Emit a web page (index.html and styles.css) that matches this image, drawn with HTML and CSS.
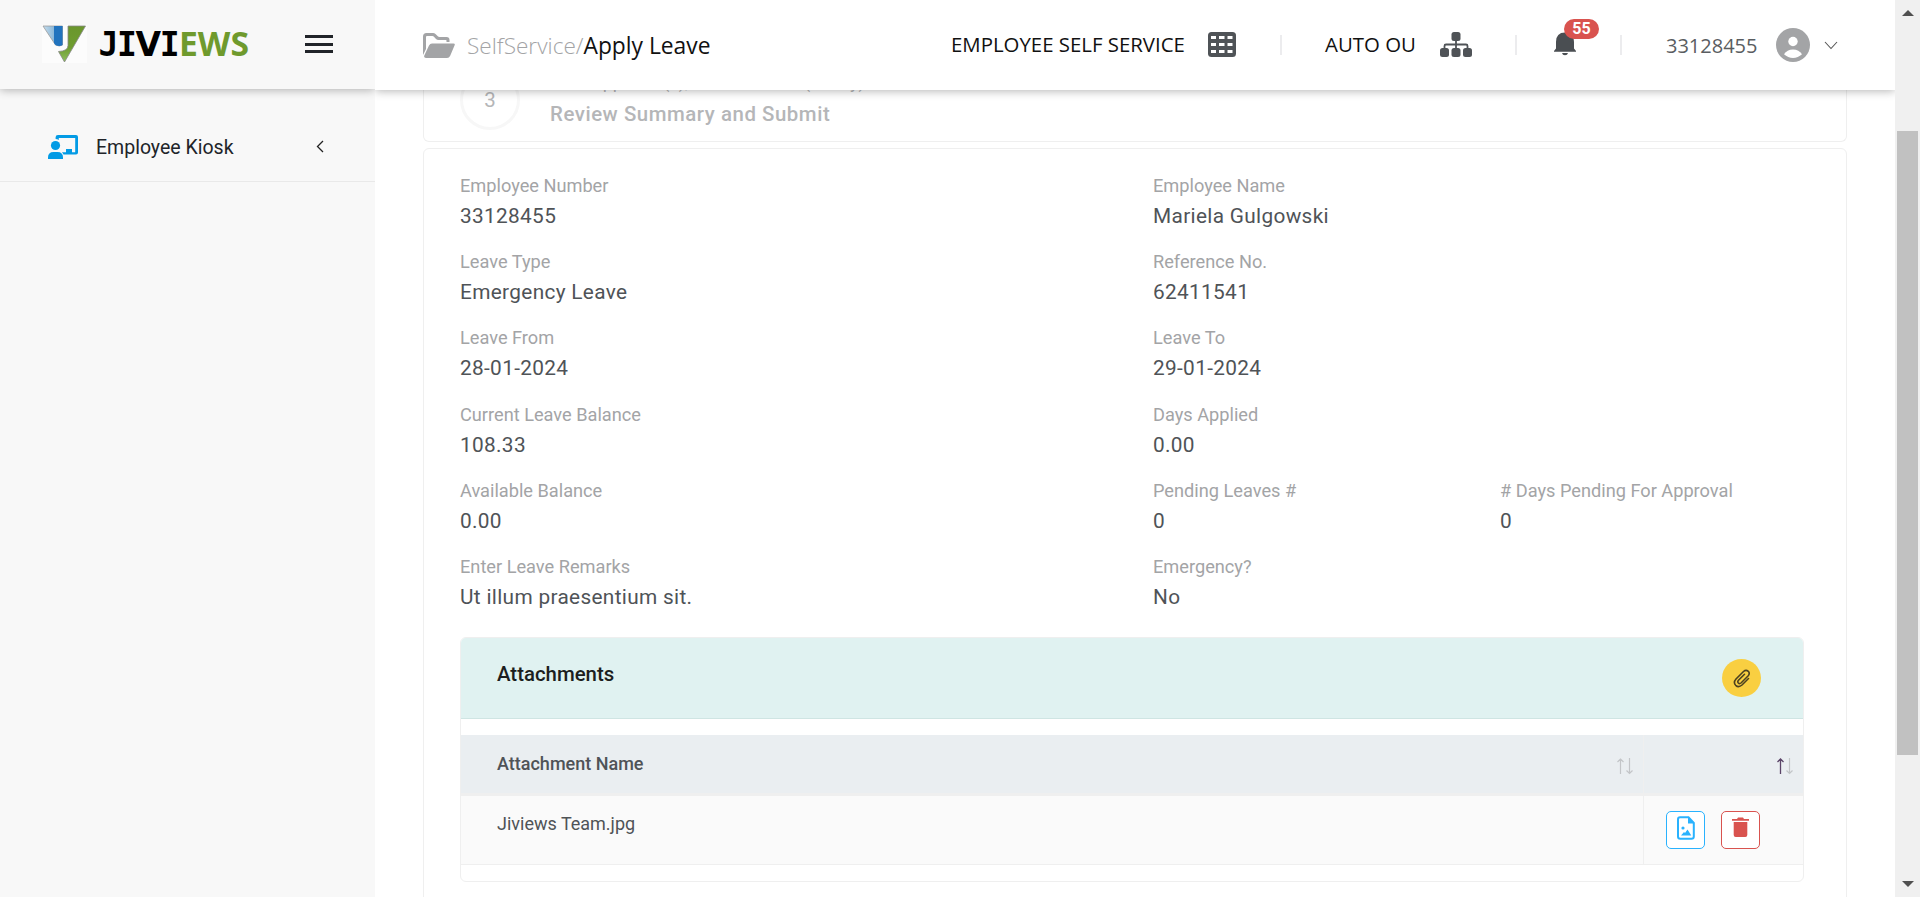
FILE: index.html
```html
<!DOCTYPE html>
<html lang="en">
<head>
<meta charset="utf-8">
<title>Apply Leave</title>
<link rel="stylesheet" href="styles.css">
</head>
<body>
<div class="app">
  <aside class="sidebar">
    <div class="brand">
      <svg class="logo" width="212" height="44" viewBox="0 0 212 44">
        <defs>
          <linearGradient id="blue" x1="0" x2="1"><stop offset="0" stop-color="#c5dcec"/><stop offset="1" stop-color="#5f9cc9"/></linearGradient>
          <linearGradient id="green" x1="0" y1="0" x2="0" y2="1"><stop offset="0" stop-color="#6a962c"/><stop offset=".6" stop-color="#6f9d30"/><stop offset="1" stop-color="#8fbf5e"/></linearGradient>
        </defs>
        <rect width="45" height="38" fill="#fcfcfc"/>
        <path d="M1 1h19.500v19q-3 2-7 0z" fill="url(#blue)" stroke="#999" stroke-width=".8"/>
        <path d="M12 1h8.500v19q-3 2-7 0l-1.500-2z" fill="#2173be"/>
        <path d="M26 1h17.500L22.500 37l-6-10.500q9.500-.5 9.500-6z" fill="url(#green)" stroke="#888" stroke-width=".8"/>
        <text class="logo-mono" y="30.500" x="56.500 75">JI</text>
        <text class="logo-wide" y="30.500" x="93.500">V</text>
        <text class="logo-mono" y="30.500" x="117.800">I</text>
        <text class="logo-green" y="30.500" x="137" textLength="70" lengthAdjust="spacingAndGlyphs">EWS</text>
      </svg>
      <div class="burger"><i></i><i></i><i></i></div>
    </div>
    <div class="menu-item">
      <svg width="30" height="24" viewBox="0 0 30 24" fill="#039be5"><path d="M10 0h18q2 0 2 2v15.500q0 2-2 2H15.500q-.7-1.500-1.600-2.300H18V14h6v3.200h3.200V2.900H10.800V5Q9.500 4 7.600 4V2.200Q7.600 0 10 0z"/><circle cx="7.500" cy="10.500" r="4.600"/><path d="M0 24v-1.500Q0 17 5.500 17h4q5.500 0 5.500 5.500V24z"/></svg>
      <span class="menu-label">Employee Kiosk</span>
      <svg class="menu-caret" width="8" height="13" viewBox="0 0 8 13" fill="none" stroke="#222" stroke-width="1.300"><path d="M7 1 1.500 6.500 7 12"/></svg>
    </div>
  </aside>

  <div class="main">
    <header class="topbar">
      <div class="crumb">
        <svg width="32" height="25" viewBox="0 0 32 25" fill="#a3a4a6"><path d="M0 22V3.500Q0 0 3.500 0H10q1.500 0 2.500 1l2.300 2.300q.6.700 1.700.7h7q3 0 3 3v2H23.500V7.500Q23.500 7 23 7H15.500q-1.500 0-2.500-1l-2.300-2.400Q10.200 3 9.500 3H4Q3 3 3 4v12z"/><path d="M9 10.500h21.500q2 0 1 2l-4.300 10.200Q26.200 25 24 25H3Q.5 25 1.300 22.500L6 12.500q1-2 3-2z"/></svg>
        <span class="crumb-parent">SelfService/</span><span class="crumb-page">Apply Leave</span>
      </div>
      <div class="module"><span>EMPLOYEE SELF SERVICE</span>
        <svg width="28" height="25" viewBox="0 0 28 25"><rect width="28" height="25" rx="3.500" fill="#4f5357"/><g fill="#fff"><path d="M3 4h5v3H3zM11 4h5.500v3H11zM19.500 4h5v3h-5zM3 11h5v3H3zM11 11h5.500v3H11zM19.500 11h5v3h-5zM3 18h5v3H3zM11 18h5.500v3H11zM19.500 18h5v3h-5z"/></g></svg>
      </div>
      <i class="divider"></i>
      <div class="unit"><span>AUTO OU</span>
        <svg width="32" height="25" viewBox="0 0 32 25" fill="#4f5357"><rect x="11.500" width="9" height="9" rx="2.500"/><rect y="16" width="9" height="9" rx="2.500"/><rect x="11.500" y="16" width="9" height="9" rx="2.500"/><rect x="23" y="16" width="9" height="9" rx="2.500"/><path d="M4.500 17v-3q0-1.500 1.500-1.500h20q1.500 0 1.500 1.500v3M16 8v9" fill="none" stroke="#4f5357" stroke-width="1.800"/></svg>
      </div>
      <i class="divider"></i>
      <div class="bell">
        <svg width="24" height="25" viewBox="0 0 24 25" fill="#4a4e52"><path d="M1 20 3 17.500V11Q3 1.500 12 1.500T21 11v6.500L23 20v.8H1zM9 22h6q-.5 2.200-3 2.200T9 22z"/></svg>
        <b class="badge">55</b>
      </div>
      <i class="divider"></i>
      <div class="user"><span>33128455</span>
        <svg class="avatar" width="34" height="34" viewBox="0 0 34 34"><circle cx="17" cy="17" r="17" fill="#a3a4a6"/><circle cx="17" cy="13.500" r="4.700" fill="#fff"/><path d="M8 26.300Q11 21.500 17 21.500t9 4.800Q22 30 17 30T8 26.300z" fill="#fff"/></svg>
        <svg class="user-caret" width="14" height="9" viewBox="0 0 14 9" fill="none" stroke="#555" stroke-width="1.100"><path d="M1 1l6 6.500L13 1"/></svg>
      </div>
    </header>

    <main class="content">
      <section class="steps">
        <div class="step-number">3</div>
        <div class="step-text">
          <div class="step-prev">Your Approver(s), Leave Details (Policy)</div>
          <div class="step-title">Review Summary and Submit</div>
        </div>
      </section>
      <section class="summary">
        <div class="fields">
          <div class="field wide"><label>Employee Number</label><p>33128455</p></div>
          <div class="field wide"><label>Employee Name</label><p>Mariela Gulgowski</p></div>
          <div class="field wide"><label>Leave Type</label><p>Emergency Leave</p></div>
          <div class="field wide"><label>Reference No.</label><p>62411541</p></div>
          <div class="field wide"><label>Leave From</label><p>28-01-2024</p></div>
          <div class="field wide"><label>Leave To</label><p>29-01-2024</p></div>
          <div class="field wide"><label>Current Leave Balance</label><p>108.33</p></div>
          <div class="field wide"><label>Days Applied</label><p>0.00</p></div>
          <div class="field wide"><label>Available Balance</label><p>0.00</p></div>
          <div class="field"><label>Pending Leaves #</label><p>0</p></div>
          <div class="field"><label># Days Pending For Approval</label><p>0</p></div>
          <div class="field wide"><label>Enter Leave Remarks</label><p>Ut illum praesentium sit.</p></div>
          <div class="field wide"><label>Emergency?</label><p>No</p></div>
        </div>
        <div class="attachments">
          <div class="att-head"><h2>Attachments</h2>
            <button class="clip"><svg width="18" height="19" viewBox="0 0 18 19" fill="none" stroke="#4c4120" stroke-width="1.600" stroke-linecap="round"><path d="M15.500 9.500 9 16Q5.500 19 2.700 16.300 0 13.500 3 10L10.500 2.500Q13 .3 15.300 2.300 17.300 4.500 15 7L8 14Q6.500 15.200 5.300 14 4.200 12.800 5.500 11.300L11.500 5.300"/></svg></button>
          </div>
          <div class="row row-head">
            <div class="cell name">Attachment Name<span class="sort"><svg width="16" height="17" viewBox="0 0 16 17" fill="none" stroke="#c3c5c8" stroke-width="1.200"><path d="M3.500 16V1M.5 4l3-3 3 3M12.500 0v15M9.500 12.500l3 3 3-3"/></svg></span></div>
            <div class="cell actions"><span class="sort"><svg width="16" height="17" viewBox="0 0 16 17" fill="none" stroke="#c3c5c8" stroke-width="1.200"><path stroke="#5b4468" stroke-width="1.300" d="M3.500 16V1M.5 4l3-3 3 3"/><path d="M12.500 0v15M9.500 12.500l3 3 3-3"/></svg></span></div>
          </div>
          <div class="row row-body">
            <div class="cell name">Jiviews Team.jpg</div>
            <div class="cell actions">
              <button class="btn view"><svg width="18" height="24" viewBox="0 0 18 24"><path d="M3 1.200h8.500L16.800 7v13.500q0 2.300-2.300 2.300H3.300Q1 22.800 1 20.500V3.400Q1 1.200 3 1.200z" fill="none" stroke="#29b2fe" stroke-width="2"/><path d="M11 1l6 6.500h-6z" fill="#29b2fe"/><circle cx="6" cy="12" r="1.600" fill="#29b2fe"/><path d="M4 19.500l3-3.500 1 1 2.500-3.500 3.800 6z" fill="#29b2fe"/></svg></button>
              <button class="btn trash"><svg width="17" height="20" viewBox="0 0 17 20" fill="#d9534f"><path d="M0 2h5l1-1.500h5L12 2h5v1.800H0zM1.700 5h13.600v13q0 2-2 2H3.700q-2 0-2-2z"/></svg></button>
            </div>
          </div>
        </div>
      </section>
    </main>
  </div>

  <div class="scrollbar"><i class="arrow up"></i><i class="thumb"></i><i class="arrow down"></i></div>
</div>
</body>
</html>
```
FILE: styles.css
```css
* { box-sizing: border-box; }
body { margin: 0; font-family: Roboto, sans-serif; font-size: 17.5px; color: #4f5357; background: #fff; overflow: hidden; }
p, h2 { margin: 0; }
svg { display: block; flex: none; }
button { padding: 0; }
.app { display: flex; height: 897px; }
.sidebar { width: 375px; flex: none; background: #f8f8f8; }
.brand { height: 89px; display: flex; align-items: flex-start; padding: 25px 42px 0; box-shadow: 0 1px 9px rgba(0,0,0,.3); clip-path: inset(0 0 -14px 0); }
.logo { overflow: visible; }
.logo-mono { font: bold 33px "DejaVu Sans Mono", monospace; fill: #000; }
.logo-wide { font: bold 33px "DejaVu Sans", sans-serif; fill: #000; }
.logo-green { font: bold 34px "Open Sans", sans-serif; fill: #6f9a2d; }
.burger { margin: 10px 0 0 51px; width: 28px; display: grid; gap: 4.5px; }
.burger i { height: 3px; background: #212429; }
.menu-item { height: 93px; padding: 23px 51px 0 48px; display: flex; align-items: center; border-bottom: 1px solid #e9e9e9; }
.menu-label { margin-left: 18px; padding-top: 2px; font-size: 19.5px; color: #212429; }
.menu-caret { margin-left: auto; }
.main { width: 1520px; flex: none; }
.topbar { position: relative; z-index: 1; height: 90px; background: #fff; box-shadow: 0 1px 9px rgba(0,0,0,.3); clip-path: inset(0 0 -14px 0); display: flex; align-items: center; font-family: "Open Sans", sans-serif; color: #111; padding-left: 48px; }
.crumb { display: flex; align-items: center; font-size: 22.8px; width: 528px; }
.crumb-parent { margin-left: 12px; font-weight: 300; font-size: 22.6px; color: #a3a4a6; }
.module, .unit { display: flex; align-items: center; font-size: 20.4px; padding-bottom: 2px; }
.module { width: 329px; }
.module svg { margin-left: 23px; }
.divider { width: 2px; height: 20px; background: #ececee; }
.unit { margin-left: 43px; width: 190px; }
.unit svg { margin-left: 24px; }
.bell { position: relative; margin-left: 36px; width: 67px; padding-bottom: 4px; }
.badge { position: absolute; left: 11px; top: -12px; width: 35px; height: 20px; border-radius: 10px; background: #d9534f; color: #fff; font: bold 16px/20px Roboto, sans-serif; text-align: center; }
.user { margin-left: 44px; display: flex; align-items: center; font-size: 20px; color: #5a5d61; }
.avatar { margin-left: 19px; }
.user-caret { margin-left: 14px; }
.content { padding: 0 48px; }
.steps { height: 52px; border: 1px solid #efefef; border-top: 0; border-radius: 0 0 6px 6px; display: flex; padding-left: 36px; color: #b5b6b8; }
.step-number { width: 60px; height: 60px; margin-top: -20px; border: 3px solid #f7f7f7; border-radius: 50%; font-size: 20.5px; line-height: 54px; text-align: center; }
.step-text { margin: -20px 0 0 30px; white-space: nowrap; }
.step-prev { font-size: 18px; line-height: 23px; padding-bottom: 2px; }
.step-title { font-weight: 500; font-size: 20.4px; line-height: 39px; letter-spacing: .55px; }
.summary { margin-top: 6px; height: 760px; border: 1px solid #efefef; border-radius: 6px; padding: 24px 42px 0 36px; }
.fields { display: grid; grid-template-columns: 347px 346px 347px 304px; grid-auto-rows: 76.200px; }
.field.wide { grid-column: span 2; }
.field label { display: block; color: #a3a4a6; font-size: 18.2px; line-height: 26px; }
.field p { font-size: 20.8px; line-height: 34px; letter-spacing: .33px; }
.attachments { margin-top: 7px; width: 1344px; height: 245px; border: 1px solid #efefef; border-radius: 6px; overflow: hidden; }
.att-head { height: 81px; background: #e0f2f1; border-bottom: 1px solid #cfe5e3; display: flex; justify-content: space-between; padding: 21px 42px 0 36px; margin-bottom: 16px; }
.att-head h2 { font-size: 20.400px; font-weight: 500; line-height: 31px; color: #1c1e20; }
.clip { width: 39px; height: 38px; border: 0; border-radius: 50%; background: #f9cf41; display: grid; place-items: center; }
.row { display: grid; grid-template-columns: 1183px 1fr; }
.row-head { height: 61px; background: #eaeef1; border-bottom: 3px solid #efefef; font-weight: 500; }
.row-body { height: 69px; background: #fafafa; border-bottom: 1px solid #efefef; }
.cell { position: relative; }
.name { padding-left: 36px; font-size: 18px; line-height: 57px; border-right: 1px solid #efefef; }
.row-body .name { line-height: 55px; }
.sort { position: absolute; right: 10px; top: 23px; }
.actions { display: flex; gap: 16px; padding: 15px 0 0 22px; }
.btn { width: 39px; height: 38px; border: 1px solid; border-radius: 5px; background: #fff; display: flex; justify-content: center; padding-top: 4px; }
.view { border-color: #29b2fe; }
.trash { border-color: #d9534f; padding-top: 5px; }
.scrollbar { width: 25px; background: #f0f0f0; display: flex; flex-direction: column; align-items: center; }
.arrow { border: 6px solid transparent; width: 0; height: 0; }
.up { border-bottom-color: #505050; border-top: 0; margin-top: 10px; }
.thumb { width: 21px; height: 624px; margin-top: 115px; background: #c1c1c1; }
.down { border-top-color: #505050; border-bottom: 0; margin-top: 126px; }
```
